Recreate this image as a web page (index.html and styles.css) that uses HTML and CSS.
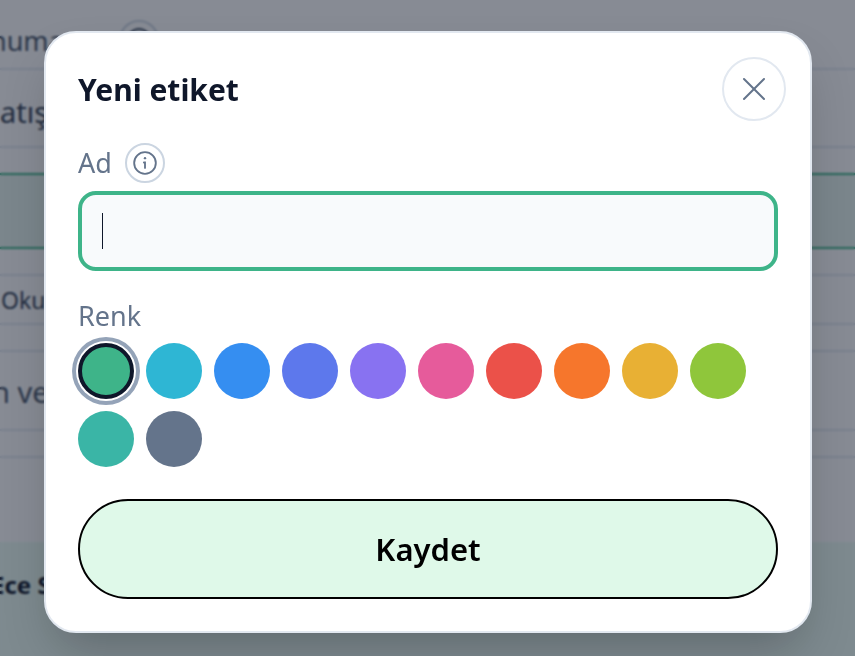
FILE: index.html
```html
<!DOCTYPE html>
<html lang="tr">
<head>
    <meta charset="UTF-8">
    <meta name="viewport" content="width=device-width, initial-scale=1.0">
    <title>Yeni etiket</title>
    <link rel="stylesheet" href="styles.css">
</head>
<body>
    <!-- Page behind the dialog -->
    <div class="page">
        <div class="row row-number">
            <span class="row-label">numara</span>
            <span class="row-hint"><span class="row-hint-dot"></span></span>
        </div>
        <div class="row row-sale"><span class="row-label">atış</span></div>
        <div class="spacer-a"></div>
        <div class="row row-selected"></div>
        <div class="spacer-b"></div>
        <div class="row row-small"><span class="row-label">Oku</span></div>
        <div class="spacer-b"></div>
        <div class="row row-terms"><span class="row-label">n ve</span></div>
        <div class="spacer-b"></div>
        <div class="row row-empty"></div>
        <div class="footer"><span class="footer-name">Ece S</span></div>
    </div>

    <div class="overlay">
        <div class="modal">
            <button class="close-button" aria-label="Kapat">
                <svg width="40" height="40" viewBox="0 0 24 24" fill="none" stroke="#64748b" stroke-width="1.2" stroke-linecap="round">
                    <path d="M18 6 6 18"/>
                    <path d="m6 6 12 12"/>
                </svg>
            </button>

            <h2 class="modal-title">Yeni etiket</h2>

            <div class="label-row">
                <span class="field-label">Ad</span>
                <span class="info-button">
                    <svg width="26" height="26" viewBox="0 0 24 24" fill="none" stroke="#64748b" stroke-width="1.7" stroke-linecap="round">
                        <circle cx="12" cy="12" r="10"/>
                        <path d="M12 16.5v-5h-1"/>
                        <path d="M12 7.5h.01" stroke-width="2.2"/>
                    </svg>
                </span>
            </div>
            <div class="name-input"><span class="caret"></span></div>

            <div class="field-label color-label">Renk</div>
            <div class="swatches">
                <span class="swatch swatch-selected" style="background-color: #3eb489"></span>
                <span class="swatch" style="background-color: #2eb6d4"></span>
                <span class="swatch" style="background-color: #358ef1"></span>
                <span class="swatch" style="background-color: #5d78ec"></span>
                <span class="swatch" style="background-color: #8872f1"></span>
                <span class="swatch" style="background-color: #e65b9b"></span>
                <span class="swatch" style="background-color: #eb5149"></span>
                <span class="swatch" style="background-color: #f6762c"></span>
                <span class="swatch" style="background-color: #e8b034"></span>
                <span class="swatch" style="background-color: #8fc63b"></span>
                <span class="swatch" style="background-color: #3ab5a6"></span>
                <span class="swatch" style="background-color: #64748b"></span>
            </div>

            <button class="save-button">Kaydet</button>
        </div>
    </div>
</body>
</html>
```

FILE: styles.css
```css
* {
    box-sizing: border-box;
}
html, body {
    height: 100%;
}
body {
    margin: 0;
    overflow: hidden;
    background-color: #fff;
    font-family: "Noto Sans", "Open Sans", sans-serif;
    color: #0f172a;
}

/* page behind the dialog */
.page {
    height: 656px;
    overflow: hidden;
}
.row {
    display: flex;
    align-items: center;
    border-bottom: 2px solid #e2e8f0;
    white-space: nowrap;
}
.spacer-a {
    height: 25px;
}
.spacer-b {
    height: 25px;
}
.row-number {
    height: 70px;
    padding-top: 12px;
    margin-left: -10px;
    gap: 29px;
    font-size: 27px;
    color: #475569;
}
.row-hint {
    display: flex;
    flex: none;
    align-items: center;
    justify-content: center;
    width: 40px;
    height: 40px;
    border: 2px solid #cbd5e1;
    border-radius: 50%;
}
.row-hint-dot {
    width: 24px;
    height: 24px;
    border: 2px solid #475569;
    border-radius: 50%;
}
.row-sale {
    height: 78px;
    padding-top: 6px;
    font-size: 29px;
    color: #334155;
}
.row-selected {
    height: 76px;
    background-color: #e6f4ee;
    border-top: 2px solid #3eb489;
    border-bottom: 2px solid #3eb489;
}
.row-small {
    height: 51px;
    padding-left: 1px;
    font-size: 23px;
    color: #334155;
    border-top: 2px solid #e2e8f0;
}
.row-terms {
    height: 81px;
    margin-left: -8px;
    padding-top: 2px;
    font-size: 29px;
    color: #475569;
    border-top: 2px solid #e2e8f0;
}
.row-empty {
    height: 86px;
    border-top: 2px solid #e2e8f0;
    border-bottom: 0;
}
.footer {
    height: 114px;
    padding-top: 27px;
    background-color: #ecfdf5;
}
.footer-name {
    display: block;
    margin-left: -9px;
    font-size: 24px;
    line-height: 32px;
    font-weight: 700;
    white-space: nowrap;
}

/* dialog */
.overlay {
    position: fixed;
    top: 0;
    left: 0;
    width: 100%;
    height: 100%;
    display: flex;
    align-items: flex-start;
    padding: 31px 0 0 44px;
    background-color: rgba(15, 23, 42, 0.5);
    backdrop-filter: blur(1px);
}
.modal {
    position: relative;
    width: 768px;
    height: 602px;
    padding: 32px;
    background-color: #fff;
    border: 2px solid #e2e8f0;
    border-radius: 32px;
    box-shadow: 0 25px 50px -12px rgba(0, 0, 0, 0.25);
}
.modal-title {
    margin: 0;
    height: 50px;
    font-size: 30px;
    line-height: 50px;
    font-weight: 700;
}
.close-button {
    position: absolute;
    top: 24px;
    right: 24px;
    display: flex;
    align-items: center;
    justify-content: center;
    width: 64px;
    height: 64px;
    padding: 0;
    background: none;
    border: 2px solid #e2e8f0;
    border-radius: 50%;
    cursor: pointer;
}
.label-row {
    display: flex;
    align-items: center;
    gap: 13px;
    margin-top: 28px;
    height: 40px;
}
.field-label {
    font-size: 27px;
    line-height: 36px;
    color: #64748b;
}
.info-button {
    display: flex;
    align-items: center;
    justify-content: center;
    width: 40px;
    height: 40px;
    border: 2px solid #cbd5e1;
    border-radius: 50%;
}
.name-input {
    display: flex;
    align-items: center;
    height: 80px;
    margin-top: 8px;
    padding-left: 20px;
    background-color: #f8fafc;
    border: 4px solid #3eb489;
    border-radius: 18px;
}
.caret {
    width: 1px;
    height: 36px;
    background-color: #0f172a;
}
.color-label {
    margin-top: 27px;
}
.swatches {
    display: flex;
    flex-wrap: wrap;
    gap: 12px;
    margin-top: 9px;
}
.swatch {
    width: 56px;
    height: 56px;
    border-radius: 50%;
}
.swatch-selected {
    border: 4px solid #0f172a;
    box-shadow: 0 0 0 2px #fff, 0 0 0 6px #94a3b8;
}
.save-button {
    display: block;
    width: 100%;
    height: 100px;
    margin-top: 32px;
    background-color: #dff9e9;
    border: 2px solid #000;
    border-radius: 50px;
    font-family: inherit;
    font-size: 31px;
    font-weight: 600;
    color: #000;
    cursor: pointer;
}
```
